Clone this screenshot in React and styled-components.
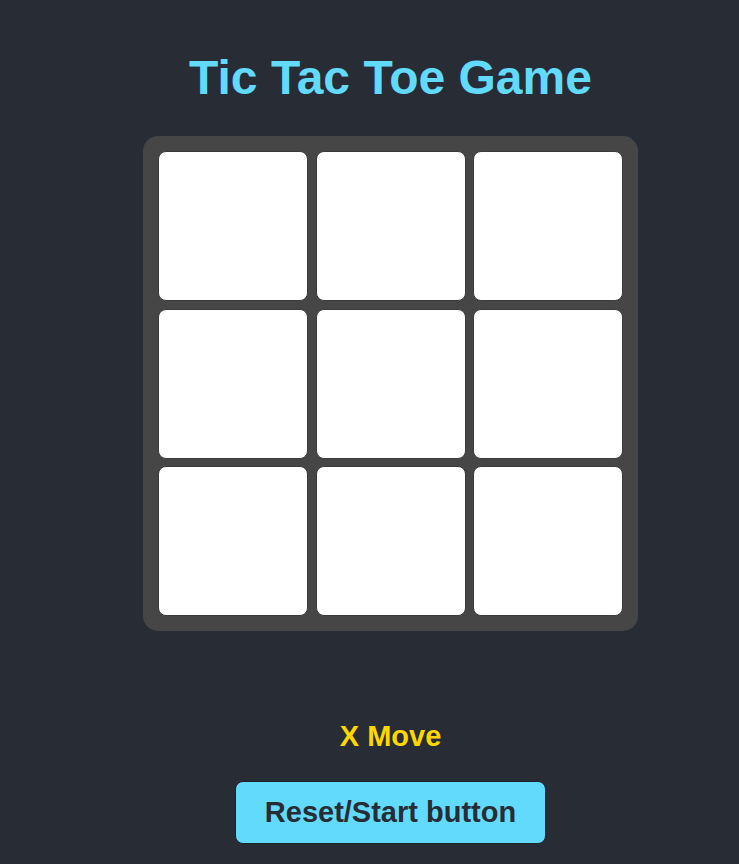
import styled, { createGlobalStyle } from "styled-components";

const GlobalStyle = createGlobalStyle`
  body {
    margin: 0;
    background: #282c34;
    font-family: "Liberation Sans", Arial, sans-serif;
  }
`;

const Page = styled.div`
  display: flex;
  flex-direction: column;
  align-items: center;
  padding-left: 42px;
  min-height: 864px;
  box-sizing: border-box;
`;

const Title = styled.h1`
  margin: 50px 0 0;
  font-size: 48px;
  line-height: 56px;
  font-weight: bold;
  color: #61dafb;
`;

const Board = styled.div`
  display: grid;
  grid-template-columns: repeat(3, 150px);
  grid-template-rows: repeat(3, 150px);
  gap: 7.5px;
  padding: 15px;
  margin-top: 30px;
  background: #464646;
  border-radius: 15px;
`;

const Cell = styled.button`
  background: #fff;
  border: 1px solid #3a3a3a;
  border-radius: 8px;
  padding: 0;
  cursor: pointer;
  font-family: inherit;
  font-size: 64px;
  font-weight: bold;
`;

const Status = styled.div`
  margin-top: 88px;
  font-size: 29px;
  line-height: 34px;
  font-weight: bold;
  color: #ffd700;
`;

const Button = styled.button`
  margin-top: 28px;
  width: 311px;
  height: 63px;
  background: #61dafb;
  color: #282c34;
  border: 1px solid #1d2128;
  border-radius: 8px;
  font-family: inherit;
  font-size: 29px;
  font-weight: bold;
  cursor: pointer;
`;

function App() {
  const cells = Array(9).fill(null);
  return (
    <>
      <GlobalStyle />
      <Page>
        <Title>Tic Tac Toe Game</Title>
        <Board>
          {cells.map((c, i) => (
            <Cell key={i}>{c}</Cell>
          ))}
        </Board>
        <Status>X Move</Status>
        <Button>Reset/Start button</Button>
      </Page>
    </>
  );
}

export default App;
